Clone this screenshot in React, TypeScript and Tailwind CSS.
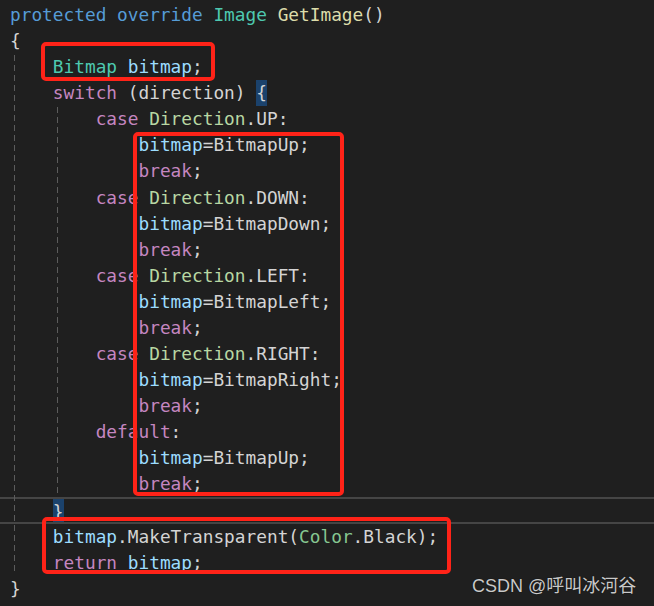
import React from "react";

type Tok = [string, string];

const KW = "text-[#569cd6]";
const TY = "text-[#4ec9b0]";
const FN = "text-[#dcdcaa]";
const CT = "text-[#c586c0]";
const VR = "text-[#9cdcfe]";
const PL = "text-[#d4d4d4]";
const EN = "text-[#b8d7a3]";
const ST = "text-[#86c691]";
const BR = "BRACE";

const lines: Tok[][] = [
  [[KW, "protected override "], [TY, "Image "], [FN, "GetImage"], [PL, "()"]],
  [[PL, "{"]],
  [[PL, "    "], [TY, "Bitmap "], [VR, "bitmap"], [PL, ";"]],
  [[PL, "    "], [CT, "switch "], [PL, "(direction) "], [BR, "{"]],
  [[PL, "        "], [CT, "case "], [EN, "Direction"], [PL, ".UP:"]],
  [[PL, "            "], [VR, "bitmap"], [PL, "=BitmapUp;"]],
  [[PL, "            "], [CT, "break"], [PL, ";"]],
  [[PL, "        "], [CT, "case "], [EN, "Direction"], [PL, ".DOWN:"]],
  [[PL, "            "], [VR, "bitmap"], [PL, "=BitmapDown;"]],
  [[PL, "            "], [CT, "break"], [PL, ";"]],
  [[PL, "        "], [CT, "case "], [EN, "Direction"], [PL, ".LEFT:"]],
  [[PL, "            "], [VR, "bitmap"], [PL, "=BitmapLeft;"]],
  [[PL, "            "], [CT, "break"], [PL, ";"]],
  [[PL, "        "], [CT, "case "], [EN, "Direction"], [PL, ".RIGHT:"]],
  [[PL, "            "], [VR, "bitmap"], [PL, "=BitmapRight;"]],
  [[PL, "            "], [CT, "break"], [PL, ";"]],
  [[PL, "        "], [CT, "default"], [PL, ":"]],
  [[PL, "            "], [VR, "bitmap"], [PL, "=BitmapUp;"]],
  [[PL, "            "], [CT, "break"], [PL, ";"]],
  [[PL, "    "], [BR, "}"]],
  [[PL, "    "], [VR, "bitmap"], [PL, ".MakeTransparent("], [ST, "Color"], [PL, ".Black);"]],
  [[PL, "    "], [CT, "return "], [VR, "bitmap"], [PL, ";"]],
  [[PL, "}"]],
];

const guide =
  "absolute w-px bg-[repeating-linear-gradient(to_bottom,#5c5c5c_0_6px,transparent_6px_10px)]";

export default function App() {
  return (
    <div className="relative w-[654px] h-[606px] overflow-hidden bg-[#1f1f1f] font-['DejaVu_Sans_Mono',monospace] text-[17.8px]">
      <div className="flex flex-col pt-[2px] pl-[10px]">
        {lines.map((toks, i) => (
          <div
            key={i}
            className={
              "h-[26.09px] leading-[26.09px] whitespace-pre " +
              (i === 19 ? "-ml-[10px] pl-[10px] border-y-2 border-[#454545] leading-[22px]" : "")
            }
          >
            {toks.map(([c, t], j) =>
              c === BR ? (
                <span key={j} className="inline-block h-full bg-[#1b426c] text-[#d4d4d4]">
                  {t}
                </span>
              ) : (
                <span key={j} className={c}>
                  {t}
                </span>
              )
            )}
          </div>
        ))}
      </div>

      {/* indent guides */}
      <div className={guide + " left-[14px] top-[55px] h-[520px]"} />
      <div className={guide + " left-[57px] top-[107px] h-[390px]"} />

      {/* red highlight boxes */}
      <div className="absolute left-[41px] top-[42px] w-[174px] h-[39px] border-4 border-[#ff2318] rounded-[5px]" />
      <div className="absolute left-[133px] top-[132px] w-[211px] h-[364px] border-4 border-[#ff2318] rounded-[5px]" />
      <div className="absolute left-[42px] top-[517px] w-[409px] h-[57px] border-4 border-[#ff2318] rounded-[5px]" />

      <div className="absolute left-[472px] top-[574px] text-[18px] leading-[24px] text-[#c9c9c9] font-['Liberation_Sans','Noto_Sans_CJK_SC',sans-serif] [text-shadow:0_0_1px_#000]">
        CSDN @呼叫冰河谷
      </div>
    </div>
  );
}
